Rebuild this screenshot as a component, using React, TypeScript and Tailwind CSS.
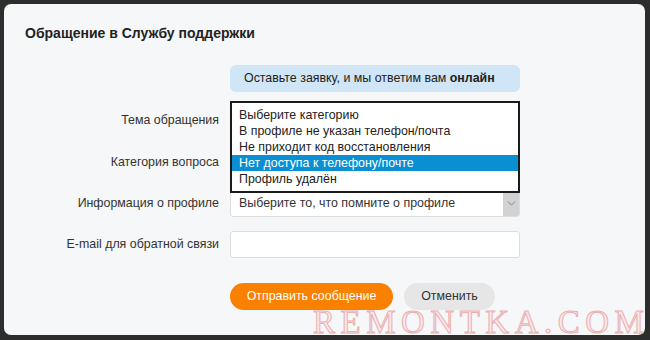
import { ChevronDown } from "lucide-react";

const categories = [
  "Выберите категорию",
  "В профиле не указан телефон/почта",
  "Не приходит код восстановления",
  "Нет доступа к телефону/почте",
  "Профиль удалён",
];

const App = () => {
  return (
    <div className="w-[650px] h-[340px] bg-[#2d2d2d] pt-[4px] pl-[4px] font-['Liberation_Sans',Arial,sans-serif] text-[12.4px] text-[#333]">
      <div className="relative w-[641px] h-[331px] bg-[#f6f7f8] rounded-[7px] pl-[21px] pt-[19px]">
        <h1 className="h-[20px] leading-[20px] text-[14px] font-bold text-[#222]">
          Обращение в Службу поддержки
        </h1>

        {/* Info banner */}
        <div className="ml-[205px] mt-[22px] w-[290px] h-[27px] rounded-[6px] bg-[#d0e5f5] pl-[14px] flex items-center text-[#222]">
          Оставьте заявку, и мы ответим вам&nbsp;<b>онлайн</b>
        </div>

        {/* Form rows */}
        <div className="relative mt-[8px] grid grid-cols-[194px_290px] gap-x-[11px] grid-rows-[41px_42px_41px_41px]">
          <div className="flex items-center justify-end">Тема обращения</div>
          <div className="flex items-center">
            <div className="w-full h-[26px] bg-white border border-[#ddd] rounded-[3px]" />
          </div>

          <div className="flex items-center justify-end">Категория вопроса</div>
          <div className="flex items-center">
            <div className="w-full h-[26px] bg-white border border-[#ddd] rounded-[3px]" />
          </div>

          <div className="flex items-center justify-end">Информация о профиле</div>
          <div className="flex items-center">
            <div className="w-full h-[26px] bg-white border border-[#ddd] rounded-[3px] flex items-center overflow-hidden">
              <span className="flex-1 pl-[8px] text-[#333]">Выберите то, что помните о профиле</span>
              <span className="w-[16px] h-full bg-[#d2d2d2] flex items-center justify-center text-[#6f6f6f]">
                <ChevronDown size={13} strokeWidth={1.5} />
              </span>
            </div>
          </div>

          <div className="flex items-center justify-end">E-mail для обратной связи</div>
          <div className="flex items-center">
            <div className="w-full h-[27px] bg-white border border-[#ddd] rounded-[3px]" />
          </div>

          {/* Open dropdown list */}
          <div className="absolute left-[205px] top-[1px] w-[290px] border-2 border-[#1a1a1a] bg-white py-[4px] text-[#222]">
            {categories.map((c, i) => (
              <div
                key={c}
                className={
                  i === 3
                    ? "h-[16px] leading-[16px] pl-[7px] bg-[#0a8fd3] text-white"
                    : "h-[16px] leading-[16px] pl-[7px]"
                }
              >
                {c}
              </div>
            ))}
          </div>
        </div>

        {/* Buttons */}
        <div className="ml-[205px] mt-[18px] flex gap-[11px]">
          <button className="w-[163px] h-[27px] rounded-full bg-[#fa8000] text-white">
            Отправить сообщение
          </button>
          <button className="w-[91px] h-[27px] rounded-full bg-[#e6e6e6] text-[#333]">
            Отменить
          </button>
        </div>

        {/* Watermark */}
        <div className="absolute left-[309px] top-[302px] font-['Liberation_Serif',serif] text-[33px] leading-[32px] tracking-[5.5px] text-[#fbe9e9] [-webkit-text-stroke:1px_#eab0b0] pointer-events-none whitespace-nowrap">
          REMONTKA.COM
        </div>
      </div>
    </div>
  );
};

export default App;
